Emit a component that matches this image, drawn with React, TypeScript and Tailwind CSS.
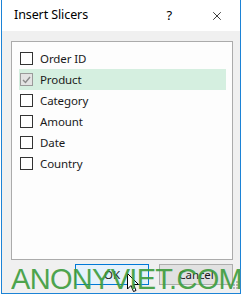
import { X } from "lucide-react";

const fields = [
  { name: "Order ID", checked: false },
  { name: "Product", checked: true },
  { name: "Category", checked: false },
  { name: "Amount", checked: false },
  { name: "Date", checked: false },
  { name: "Country", checked: false },
];

const Checkbox = ({ checked }: { checked: boolean }) =>
  checked ? (
    <span className="ml-px flex h-[13px] w-[13px] shrink-0 items-center justify-center border border-[#9a9a9a] bg-[#e3e3e3]">
      <svg width="9" height="8" viewBox="0 0 9 8" fill="none">
        <path d="M1 4 L3.5 6.5 L8 1" stroke="#8a8a8a" strokeWidth="1.4" />
      </svg>
    </span>
  ) : (
    <span className="ml-px block h-[13px] w-[13px] shrink-0 border border-[#333333] bg-white" />
  );

export default function App() {
  return (
    <div
      className="relative h-[294px] w-[244px] overflow-hidden bg-white text-[11.5px] tracking-[-0.1px] text-[#1a1a1a]"
      style={{ fontFamily: '"Segoe UI", "Noto Sans", sans-serif' }}
    >
      <div className="ml-px flex h-[294px] w-[240px] flex-col border-x border-b border-[#1c83d6] bg-[#f0f0f0]">
        {/* title bar */}
        <div className="flex h-[31px] items-center bg-white">
          <span className="ml-[12px] text-[12.5px] text-black">Insert Slicers</span>
          <span className="ml-auto mr-[38px] text-[13px] text-black">?</span>
          <X className="mr-[16px] h-[14px] w-[14px] text-black" strokeWidth={1.3} />
        </div>

        {/* field list */}
        <div className="ml-[9px] mt-[10px] h-[219px] w-[222px] border border-[#ababab] bg-[#fdfdfd] pt-[6px]">
          {fields.map((f) => (
            <div
              key={f.name}
              className={`ml-[7px] flex h-[21px] w-[207px] items-center gap-[7px] ${
                f.checked ? "bg-[#d5efe0]" : ""
              }`}
            >
              <Checkbox checked={f.checked} />
              <span>{f.name}</span>
            </div>
          ))}
        </div>

        {/* buttons */}
        <div className="ml-[73px] mt-[4px] flex gap-[10px]">
          <button className="h-[21px] w-[74px] border border-[#0078d7] bg-[#e5f1fb]">OK</button>
          <button className="h-[21px] w-[74px] border border-[#adadad] bg-[#e1e1e1]">Cancel</button>
        </div>
      </div>

      {/* resize grip */}
      <svg className="absolute left-[230px] top-[281px]" width="9" height="9" viewBox="0 0 9 9">
        <rect x="6" y="0" width="2" height="2" fill="#b8b8b8" />
        <rect x="3" y="3" width="2" height="2" fill="#b8b8b8" />
        <rect x="6" y="3" width="2" height="2" fill="#b8b8b8" />
        <rect x="0" y="6" width="2" height="2" fill="#b8b8b8" />
        <rect x="3" y="6" width="2" height="2" fill="#b8b8b8" />
        <rect x="6" y="6" width="2" height="2" fill="#b8b8b8" />
      </svg>

      {/* mouse cursor */}
      <svg className="absolute left-[127px] top-[273px]" width="13" height="20" viewBox="0 0 13 20">
        <path
          d="M0.5 0.5 L0.5 16 L4 12.5 L6.5 18.5 L9 17.5 L6.5 11.5 L11.5 11.5 Z"
          fill="white"
          stroke="black"
          strokeWidth="1"
        />
      </svg>

      {/* watermark */}
      <span
        className="pointer-events-none absolute left-[11px] top-[265px] text-[29px] leading-[29px] tracking-[-0.7px] text-[#3c9c3c] opacity-90"
        style={{ fontFamily: '"Liberation Sans", sans-serif' }}
      >
        ANONYVIET.COM
      </span>
    </div>
  );
}
